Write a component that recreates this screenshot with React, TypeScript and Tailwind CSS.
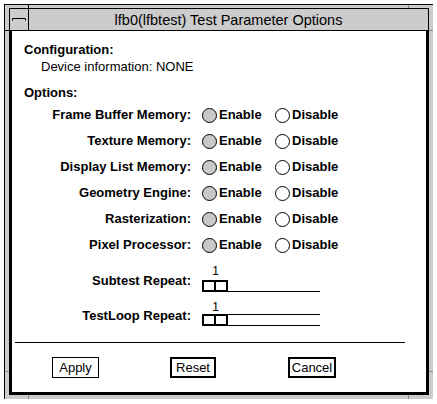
import React from 'react';

const options = [
  'Frame Buffer Memory:',
  'Texture Memory:',
  'Display List Memory:',
  'Geometry Engine:',
  'Rasterization:',
  'Pixel Processor:',
];

const Radio: React.FC<{ checked?: boolean; label: string }> = ({ checked, label }) => (
  <div className="flex items-center">
    <span
      className={`h-[15px] w-[15px] rounded-full border border-black ${checked ? 'bg-[#c8c8c8]' : 'bg-white'}`}
    />
    <span className="ml-[2px] text-[13px] font-bold leading-4">{label}</span>
  </div>
);

const Slider: React.FC<{ label: string; value: number; fullTrack?: boolean; gap: string; labelTop: string }> = ({
  label,
  value,
  fullTrack,
  gap,
  labelTop,
}) => (
  <div className="flex">
    <div className={`w-[179px] text-right text-[13px] font-bold leading-4 ${labelTop}`}>{label}</div>
    <div className="ml-[11px] flex w-[118px] flex-col">
      <div className="w-[27px] text-center text-[12px] leading-[14px]">{value}</div>
      <div className={`flex h-[12px] ${gap}`}>
        <div className="flex w-[26px] border-2 border-black">
          <div className="w-[12px] border-r-2 border-black" />
        </div>
        <div className={`flex-1 border-b border-black ${fullTrack ? 'border-t' : ''}`} />
      </div>
    </div>
  </div>
);

const Button: React.FC<{ label: string; className: string }> = ({ label, className }) => (
  <div className={`flex h-[21px] items-center justify-center border-black text-[13px] ${className}`}>{label}</div>
);

export default function App() {
  return (
    <div className="h-[404px] w-[437px] bg-white pl-[4px] pt-[4px] font-['Liberation_Sans',Arial,sans-serif] text-black">
      <div className="relative h-[395px] w-[429px] border-l border-t border-black bg-[#cccccc] pl-[4px] pt-[3px]">
        {/* resize corner ticks */}
        <div className="absolute left-[23px] top-0 h-[3px] w-px bg-black" />
        <div className="absolute left-[403px] top-0 h-[3px] w-px bg-[#888]" />
        <div className="absolute left-[23px] top-[390px] h-[4px] w-px bg-[#888]" />
        <div className="absolute left-[403px] top-[390px] h-[4px] w-px bg-[#888]" />
        <div className="absolute left-0 top-[25px] h-px w-[4px] bg-black" />
        <div className="absolute left-[424px] top-[25px] h-px w-[4px] bg-[#888]" />
        <div className="absolute left-0 top-[366px] h-px w-[4px] bg-[#888]" />
        <div className="absolute left-[424px] top-[366px] h-px w-[4px] bg-[#888]" />

        <div className="flex h-[387px] w-[420px] flex-col">
          <div className="flex h-[23px] border border-black bg-[#cccccc]">
            <div className="flex w-[19px] items-start border-r border-black">
              <svg width="18" height="21" viewBox="0 0 18 21" className="block">
                <path d="M2.5 11.5 V9.5 H15.5 V11.5" fill="none" stroke="black" strokeWidth="1" />
              </svg>
            </div>
            <div className="flex-1 text-center text-[14.5px] leading-[22px]">lfb0(lfbtest) Test Parameter Options</div>
          </div>

          <div className="flex flex-1 flex-col border-x-[3px] border-b-[3px] border-black bg-white pt-[11px]">
            <div className="ml-[12px] text-[13px] font-bold leading-4">Configuration:</div>
            <div className="ml-[29px] mt-px text-[13px] leading-4">Device information: NONE</div>
            <div className="ml-[12px] mt-[10px] text-[13px] font-bold leading-4">Options:</div>

            <div className="mt-px flex flex-col">
              {options.map((label) => (
                <div key={label} className="flex h-[26px] items-center">
                  <div className="w-[179px] text-right text-[13px] font-bold leading-4">{label}</div>
                  <div className="ml-[11px] w-[73px]">
                    <Radio checked label="Enable" />
                  </div>
                  <Radio label="Disable" />
                </div>
              ))}
            </div>

            <div className="mt-[6px]">
              <Slider label="Subtest Repeat:" value={1} gap="mt-[2px]" labelTop="mt-[9px]" />
            </div>
            <div className="mt-[8px]">
              <Slider label="TestLoop Repeat:" value={1} fullTrack gap="mt-0" labelTop="mt-[8px]" />
            </div>

            <div className="ml-[3px] mt-[16px] h-px w-[390px] bg-black" />

            <div className="mt-[14px] flex">
              <Button label="Apply" className="ml-[40px] w-[47px] border" />
              <Button label="Reset" className="ml-[71px] w-[46px] border-2" />
              <Button label="Cancel" className="ml-[72px] w-[48px] border-2" />
            </div>
          </div>
        </div>
      </div>
    </div>
  );
}
